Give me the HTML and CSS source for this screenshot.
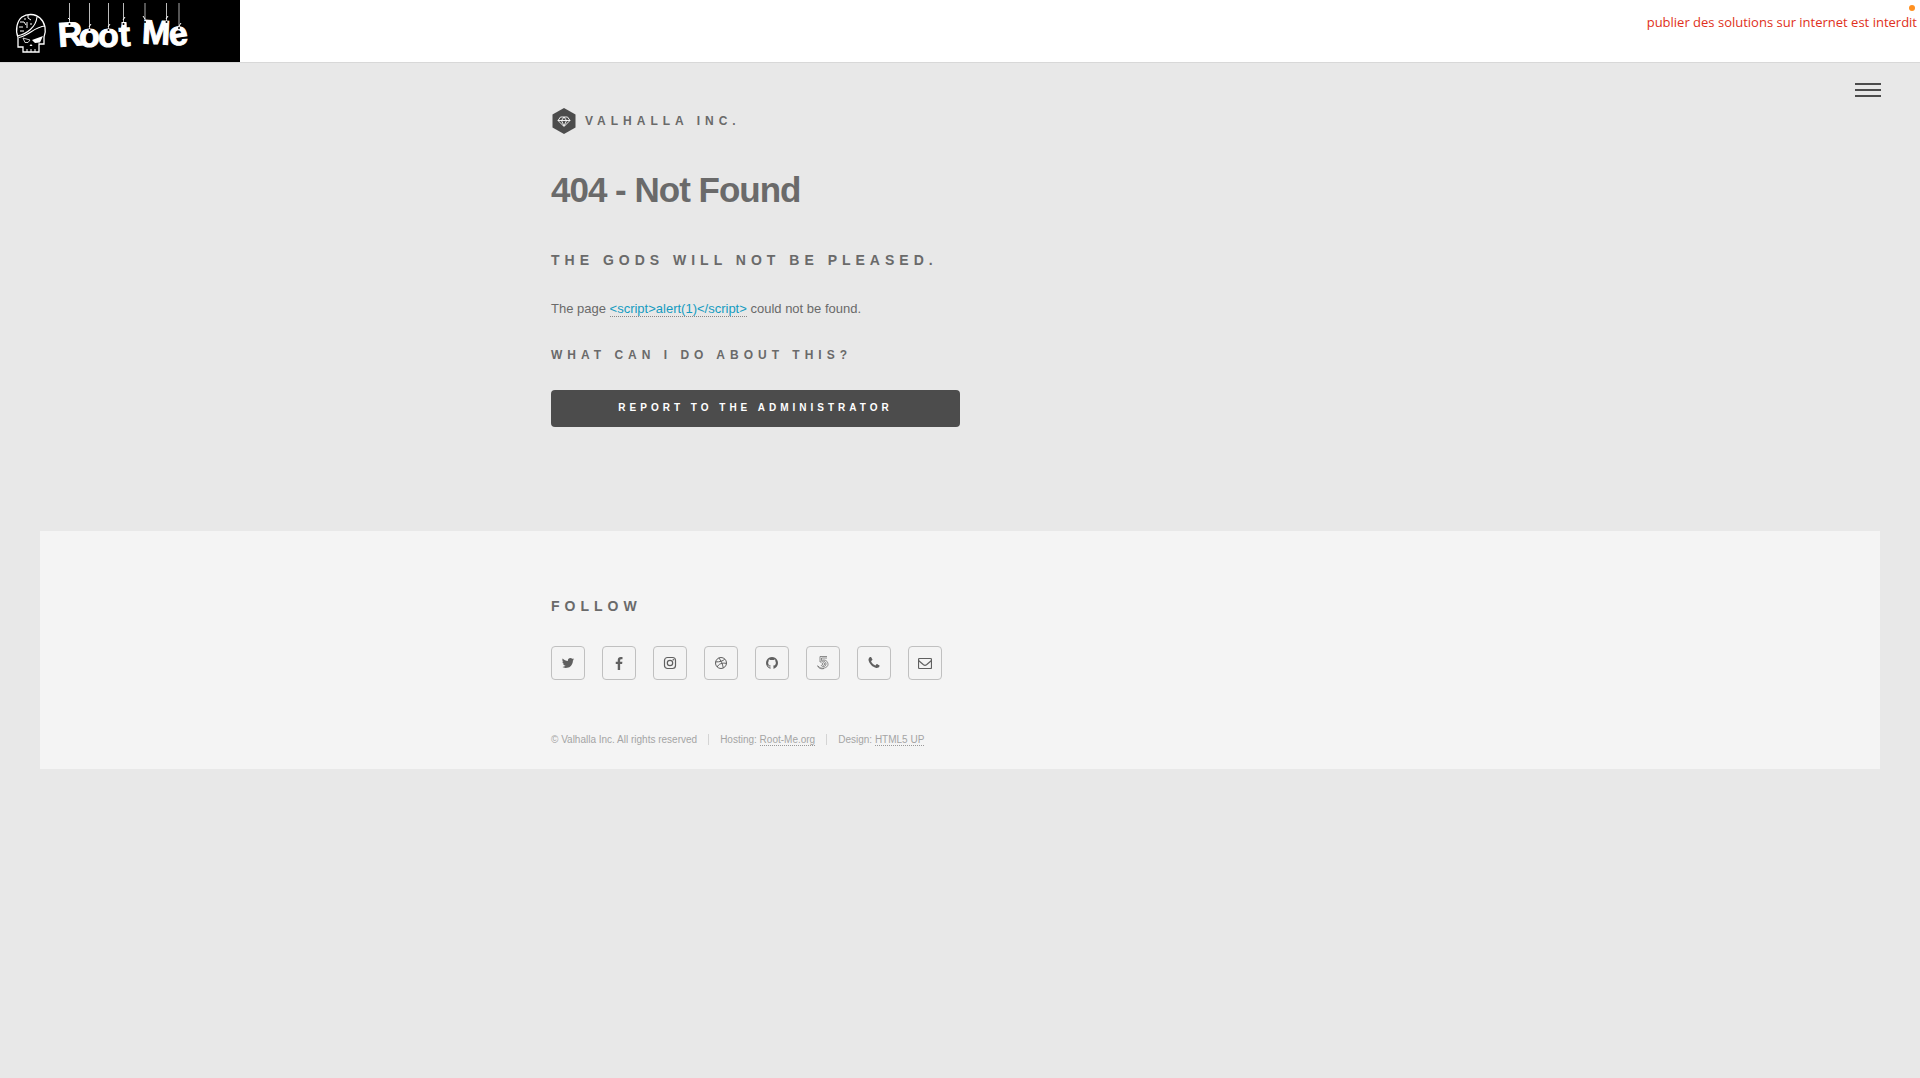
FILE: index.html
```html
<!DOCTYPE html>
<html lang="en">
<head>
<meta charset="utf-8">
<meta name="viewport" content="width=device-width, initial-scale=1">
<title>Valhalla Inc. - 404</title>
<link rel="stylesheet" href="styles.css">
</head>
<body>
<div class="topbar">
  <a class="rootme" href="#" aria-label="Root Me">
    <svg width="240" height="62" viewBox="0 0 240 62">
      <g fill="none" stroke="#fff">
        <path d="M18 37C15 30 17 21 22 17C27 13.500 35 13.500 40 18C45.500 23 46.500 31 44 37V44H39V52H23V47H18V37" stroke-width="1.300"/>
        <path d="M17 36C27 34 36 27 37 17M19 37.500C30 35 34 27 45 26" stroke-width="1.100"/>
        <path d="M20 22h4l2 3M20 31h4M19 27h4M28 15v3l3 2M27 22v6M31 23v2M24 19h2" stroke-width="1"/>
        <path d="M27 49v3M31 49v3M35 49v3" stroke-width="1"/>
        <path d="M23 38l7 2l-2 2.500h-3z" stroke-width=".8"/>
      </g>
      <path d="M32 40l11-4l-3 6.500l-5 .5zM31 44l1.500 2h-3z" fill="#fff"/>
      <path class="strings" d="M69.500 3v20M89.500 3v26M108.500 3v26M123.500 3v20M166.500 3v19"/>
      <path class="strings strings-thick" d="M145 3v18M179 3v24"/>
      <g class="letters">
        <text x="58" y="46" transform="rotate(-4 69 35)">R</text>
        <text x="79" y="47">o</text>
        <text x="98" y="47">o</text>
        <text x="119" y="46" transform="rotate(-3 124 35)">t</text>
        <text x="142" y="44" transform="rotate(3 156 32)">M</text>
        <text x="169" y="45" transform="rotate(-8 179 36)">e</text>
      </g>
      <path d="M121.500 22h5v6h-5z" fill="#fff"/>
      <g class="knots"><circle cx="69.500" cy="24" r="1"/><circle cx="89.500" cy="30" r="1"/><circle cx="108.500" cy="30" r="1"/><circle cx="123.500" cy="24" r="1"/><circle cx="145" cy="22" r="1"/><circle cx="166.500" cy="22" r="1"/><circle cx="179" cy="28" r="1"/></g>
      <path d="M68 18l2 2M91 24l-2 3M110 24l-2 3M125 17l-2 3M143 16l2 3M168 16l-2 3M181 23l-2 3" stroke="#fff"/>
    </svg>
  </a>
  <p class="warning">publier des solutions sur internet est interdit<span class="dot"></span></p>
</div>

<header class="header">
  <div class="inner">
    <a class="brand" href="#">
      <svg width="24" height="26" viewBox="0 0 24 26">
        <path d="M12 0L23.500 6.500V19.500L12 26L.5 19.500V6.500z" fill="#4c4c4c"/>
        <path d="M8.500 9h7l2.500 3.500L12 18.500L6 12.500zM6 12.500h12M9.500 12.500L12 18M14.500 12.500L12 18M9.500 12.500L12 9l2.500 3.500" fill="none" stroke="#fff" stroke-width=".9"/>
      </svg>
      <span>Valhalla Inc.</span>
    </a>
  </div>
  <button class="menu" type="button" aria-label="Menu"><span></span><span></span><span></span></button>
</header>

<main class="main">
  <div class="inner">
    <h1>404 - Not Found</h1>
    <h2>The gods will not be pleased.</h2>
    <p class="message">The page <a href="#">&lt;script&gt;alert(1)&lt;/script&gt;</a> could not be found.</p>
    <h3>What can I do about this?</h3>
    <button class="report" type="button">Report to the administrator</button>
  </div>
</main>

<footer class="footer">
  <div class="inner">
    <h2>Follow</h2>
    <ul class="icons">
      <li><a href="#" aria-label="Twitter"><svg viewBox="0 0 1792 1792"><path d="M1684 408q-67 98-162 167 1 14 1 42 0 130-38 259.500t-115.500 248.500-184.500 210.500-258 146-323 54.500q-271 0-496-145 35 4 78 4 225 0 401-138-105-2-188-64.500t-114-159.500q33 5 61 5 43 0 85-11-112-23-185.500-111.500t-73.500-205.500v-4q68 38 146 41-66-44-105-115t-39-154q0-88 44-163 121 149 294.500 238.500t371.500 99.500q-8-38-8-74 0-134 94.500-228.500t228.500-94.500q140 0 236 102 109-21 205-78-37 115-142 178 93-10 186-50z"/></svg></a></li>
      <li><a href="#" aria-label="Facebook"><svg viewBox="0 0 1792 1792"><path d="M1343 140v264h-157q-86 0-116 36t-30 108v189h293l-39 296h-254v759h-306v-759h-255v-296h255v-218q0-186 104-288.500t277-102.500q147 0 228 12z"/></svg></a></li>
      <li><a href="#" aria-label="Instagram"><svg viewBox="0 0 14 14"><g class="line"><rect x="1.500" y="1.500" width="11" height="11" rx="3"/><circle cx="7" cy="7" r="2.700"/></g><circle cx="10.300" cy="3.700" r=".8"/></svg></a></li>
      <li><a href="#" aria-label="Dribbble"><svg viewBox="0 0 14 14"><g class="line thin"><circle cx="7" cy="7" r="5.500"/><path d="M4.800 1.900C7 4.500 8.600 8 9.300 12M1.600 5.900C5.500 6 9 5.200 10.800 3M3.200 11C4.500 8 8 6.500 12.500 7.400"/></g></svg></a></li>
      <li><a href="#" aria-label="GitHub"><svg viewBox="0 0 1792 1792"><path d="M896 128q209 0 385.500 103t279.500 279.500 103 385.500q0 251-146.500 451.500t-378.500 277.500q-27 5-40-7t-13-30q0-3 .5-76.500t.5-134.500q0-97-52-142 57-6 102.500-18t94-39 81-66.500 53-105 20.500-150.500q0-119-79-206 37-91-8-204-28-9-81 11t-92 44l-38 24q-93-26-192-26t-192 26q-16-11-42.500-27t-83.500-38.500-85-13.500q-45 113-8 204-79 87-79 206 0 85 20.500 150t52.500 105 80.500 67 94 39 102.500 18q-39 36-49 103-21 10-45 15t-57 5-65.500-21.500-55.500-62.500q-19-32-48.500-52t-49.500-24l-20-3q-21 0-29 4.500t-5 11.500 9 14 13 12l7 5q22 10 43.500 38t31.500 51l10 23q13 38 44 61.500t67 30 69.500 7 55.500-3.500l23-4q0 38 .5 88.500t.5 54.500q0 18-13 30t-40 7q-232-77-378.500-277.500t-146.500-451.500q0-209 103-385.500t279.500-279.500 385.500-103z"/></svg></a></li>
      <li><a href="#" aria-label="500px"><svg viewBox="0 0 14 14"><g class="line hair"><path d="M11 .5H4V6h1.500C7 4.500 10 5 10 8S6 11.500 5 9M11 2H5.500v2.500C9 3 12 5 12 8.500S5 14 2 10M1.500 9.500C2 12 5 13.500 8 12.500"/><circle cx="7.500" cy="8" r="1.300"/></g></svg></a></li>
      <li><a href="#" aria-label="Phone"><svg viewBox="0 0 1792 1792"><path d="M1600 1240q0 27-10 70.500t-21 68.500q-21 50-122 106-94 51-186 51-27 0-53-3.500t-57.500-12.500-47-14.500-55.500-20.500-49-18q-98-35-175-83-127-79-264-216t-216-264q-48-77-83-175-3-9-18-49t-20.500-55.500-14.500-47-12.500-57.500-3.500-53q0-92 51-186 56-101 106-122 25-11 68.500-21t70.500-10q14 0 21 3 18 6 53 76 11 19 30 54t35 63.500 31 53.500q3 4 17.500 25t21.500 35.500 7 28.500q0 20-28.500 50t-62 55-62 53-28.500 46q0 9 5 22.500t8.500 20.500 14 24 11.500 19q76 137 174 235t235 174q2 1 19 11.500t24 14 20.500 8.500 22.500 5q18 0 46-28.500t53-62 55-62 50-28.500q14 0 28.500 7t35.500 21.500 25 17.500q25 15 53.500 31t63.500 35 54 30q70 35 76 53 3 7 3 21z"/></svg></a></li>
      <li><a href="#" aria-label="Email"><svg viewBox="0 0 14 14"><g class="line"><rect x=".5" y="2.500" width="13" height="10" rx="1"/><path d="M.5 4.500L5.500 8.700Q7 9.900 8.500 8.700L13.500 4.500"/></g></svg></a></li>
    </ul>
    <ul class="copyright">
      <li>© Valhalla Inc. All rights reserved</li>
      <li>Hosting: <a href="#">Root-Me.org</a></li>
      <li>Design: <a href="#">HTML5 UP</a></li>
    </ul>
  </div>
</footer>
</body>
</html>
```
FILE: styles.css
```css
* {
  box-sizing: border-box;
}

body {
  margin: 0;
  background: #e8e8e8;
  color: #6a6a6a;
  font: 13px/24px "Liberation Sans", Arial, sans-serif;
}

h1, h2, h3, p, ul {
  margin: 0;
  padding: 0;
}

ul {
  list-style: none;
}

a {
  color: inherit;
  text-decoration: none;
}

button {
  border: 0;
  font-family: inherit;
  cursor: pointer;
}

.topbar {
  display: flex;
  justify-content: space-between;
  height: 63px;
  background: #fff;
  border-bottom: 1px solid #d8d8d8;
}

.rootme {
  width: 240px;
  height: 62px;
  background: #000;
}

.rootme svg {
  display: block;
}

.strings {
  stroke: #bbb;
  stroke-width: 1;
}

.strings-thick {
  stroke: #555;
  stroke-width: 2;
}

.letters {
  fill: #fff;
  stroke: #fff;
  stroke-width: 1;
  font: bold 34px "Liberation Sans", Arial, sans-serif;
}

.warning {
  position: relative;
  padding: 10px 3px 0 0;
  color: #e03020;
  font: 13px/24px "Open Sans", "Noto Sans", sans-serif;
}

.dot {
  position: absolute;
  top: 5px;
  right: 5px;
  width: 6px;
  height: 6px;
  border-radius: 50%;
  background: #ff9020;
}

.header {
  position: relative;
  padding: 44px 40px 0;
}

.inner {
  max-width: 818px;
  margin: 0 auto;
}

.brand {
  display: inline-flex;
  align-items: center;
  gap: 9px;
  height: 28px;
  padding-left: 1px;
  font-size: 12px;
  font-weight: bold;
  letter-spacing: 5px;
  text-transform: uppercase;
}

.menu {
  position: absolute;
  top: 20px;
  right: 39px;
  display: flex;
  flex-direction: column;
  gap: 4px;
  padding: 0;
  background: none;
}

.menu span {
  width: 26px;
  height: 2px;
  background: #4c4c4c;
}

.main {
  padding: 24px 40px 104px;
}

h1 {
  margin-bottom: 34px;
  font-size: 35px;
  line-height: 48px;
  letter-spacing: -1px;
}

h2 {
  font-size: 14px;
  line-height: 24px;
  letter-spacing: 5px;
  text-transform: uppercase;
}

.main h2 {
  margin-bottom: 25px;
}

.message {
  margin-bottom: 22px;
}

.message a {
  color: #149bc0;
  border-bottom: 1px dotted #888;
}

h3 {
  margin-bottom: 23px;
  font-size: 12px;
  line-height: 24px;
  letter-spacing: 5px;
  text-transform: uppercase;
}

.report {
  display: block;
  width: 50%;
  height: 37px;
  padding: 0 0 2px;
  border-radius: 4px;
  background: #4c4c4c;
  color: #fff;
  font-size: 10px;
  font-weight: bold;
  letter-spacing: 4px;
  text-transform: uppercase;
}

.footer {
  margin: 0 40px 40px;
  padding: 63px 0 24px;
  background: #f4f4f4;
}

.icons {
  display: flex;
  gap: 17px;
  margin: 28px 0 54px;
}

.icons a {
  display: flex;
  align-items: center;
  justify-content: center;
  width: 34px;
  height: 34px;
  border: 1px solid #c0c0c0;
  border-radius: 4px;
}

.icons svg {
  width: 14px;
  height: 14px;
  fill: #606060;
}

.line {
  fill: none;
  stroke: #606060;
  stroke-width: 1.2;
}

.thin {
  stroke-width: 1;
}

.hair {
  stroke-width: .7;
}

.copyright {
  display: flex;
  align-items: center;
  color: #a4a4a4;
  font-size: 10px;
  line-height: 24px;
}

.copyright li {
  line-height: 11px;
}

.copyright li + li {
  margin-left: 11px;
  padding-left: 11px;
  border-left: 1px solid #d4d4d4;
}

.copyright a {
  border-bottom: 1px dotted #999;
}
```
